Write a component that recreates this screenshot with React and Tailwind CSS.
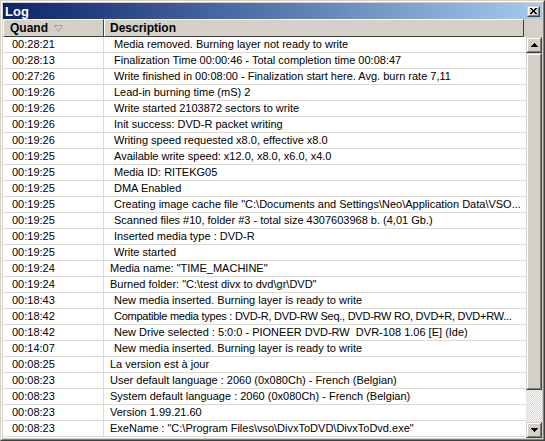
import React from "react";

const rows = [
  ["00:28:21", "Media removed. Burning layer not ready to write", true],
  ["00:28:13", "Finalization Time 00:00:46 - Total completion time 00:08:47", true],
  ["00:27:26", "Write finished in 00:08:00 - Finalization start here. Avg. burn rate 7,11", true],
  ["00:19:26", "Lead-in burning time (mS) 2", true],
  ["00:19:26", "Write started 2103872 sectors to write", true],
  ["00:19:26", "Init success: DVD-R packet writing", true],
  ["00:19:26", "Writing speed requested x8.0, effective x8.0", true],
  ["00:19:25", "Available write speed: x12.0, x8.0, x6.0, x4.0", true],
  ["00:19:25", "Media ID: RITEKG05", true],
  ["00:19:25", "DMA Enabled", true],
  ["00:19:25", 'Creating image cache file "C:\\Documents and Settings\\Neo\\Application Data\\VSO...', true],
  ["00:19:25", "Scanned files #10, folder #3 - total size 4307603968 b. (4,01 Gb.)", true],
  ["00:19:25", "Inserted media type : DVD-R", true],
  ["00:19:25", "Write started", true],
  ["00:19:24", 'Media name: "TIME_MACHINE"', false],
  ["00:19:24", 'Burned folder: "C:\\test divx to dvd\\gr\\DVD"', false],
  ["00:18:43", "New media inserted. Burning layer is ready to write", true],
  ["00:18:42", "Compatible media types : DVD-R, DVD-RW Seq., DVD-RW RO, DVD+R, DVD+RW...", true, true],
  ["00:18:42", "New Drive selected : 5:0:0 - PIONEER DVD-RW\u00a0 DVR-108 1.06 [E] (Ide)", true],
  ["00:14:07", "New media inserted. Burning layer is ready to write", true],
  ["00:08:25", "La version est à jour", false],
  ["00:08:23", "User default language : 2060 (0x080Ch) - French (Belgian)", false],
  ["00:08:23", "System default language : 2060 (0x080Ch) - French (Belgian)", false],
  ["00:08:23", "Version 1.99.21.60", false],
  ["00:08:23", 'ExeName : "C:\\Program Files\\vso\\DivxToDVD\\DivxToDvd.exe"', false],
];

function Raised({ className = "", children }) {
  return (
    <div className={"border border-t-[#d4d0c8] border-l-[#d4d0c8] border-r-[#404040] border-b-[#404040] " + className}>
      <div className="w-full h-full border border-t-white border-l-white border-r-[#808080] border-b-[#808080] bg-[#d4d0c8] flex items-center justify-center">
        {children}
      </div>
    </div>
  );
}

export default function App() {
  return (
    <div
      className="w-[545px] h-[441px] bg-[#d4d0c8] border border-t-[#d4d0c8] border-l-[#d4d0c8] border-r-[#404040] border-b-[#404040] text-black"
      style={{ fontFamily: '"Liberation Sans", Arial, sans-serif' }}
    >
      <div className="w-full h-full border border-t-white border-l-white border-r-[#808080] border-b-[#808080] p-px flex flex-col">
        {/* Title bar */}
        <div className="h-[16px] shrink-0 bg-[linear-gradient(to_right,#0a246a,#a6caf0)] flex items-center justify-between pl-[2px] pr-[2px]">
          <span className="text-white font-bold text-[13px] leading-none">Log</span>
          <Raised className="w-[13px] h-[11px]">
            <svg width="7" height="6" viewBox="0 0 7 6" shapeRendering="crispEdges">
              <path d="M0 0h2v1H0zM5 0h2v1H5zM1 1h2v1H1zM4 1h2v1H4zM2 2h3v2H2zM1 4h2v1H1zM4 4h2v1H4zM0 5h2v1H0zM5 5h2v1H5z" fill="#000" />
            </svg>
          </Raised>
        </div>
        {/* Body */}
        <div className="flex-1 flex min-h-0">
          <div className="flex-1 flex flex-col min-w-0 bg-white">
            {/* Header */}
            <div className="h-[18px] shrink-0 flex bg-[#d4d0c8] text-[12px] font-bold pr-[2px]">
              <div className="w-[101px] shrink-0 border-t border-l border-t-white border-l-white border-r border-r-[#404040] border-b border-b-[#404040] flex items-center pl-[6px] gap-[6px]">
                <span>Quand</span>
                <svg width="9" height="7" viewBox="0 0 9 7" shapeRendering="crispEdges">
                  <path d="M0.5 0.5H8.5L4.5 6.5Z" fill="none" stroke="#a0a0a0" />
                </svg>
              </div>
              <div className="flex-1 border-t border-l border-t-white border-l-white border-r border-r-[#404040] border-b border-b-[#404040] flex items-center pl-[5px]">
                <span>Description</span>
              </div>
            </div>
            {/* Rows */}
            <div className="flex-1 overflow-hidden text-[11px]">
              {rows.map(([t, d, ind, tight], i) => (
                <div key={i} className="h-[16px] flex border-b border-b-[#dcdad5] leading-[15px]">
                  <div className="w-[101px] shrink-0 pl-[9px] border-r border-r-[#dcdad5]">{t}</div>
                  <div
                    className={
                      "flex-1 whitespace-pre overflow-hidden " +
                      (ind ? "pl-[10px]" : "pl-[6px]") +
                      (tight ? " tracking-[-0.25px]" : "")
                    }
                  >
                    {d}
                  </div>
                </div>
              ))}
            </div>
          </div>
          {/* Scrollbar */}
          <div className="w-[16px] shrink-0 flex flex-col pt-[18px] bg-[#d4d0c8]">
            <Raised className="w-[16px] h-[16px] shrink-0">
              <svg width="7" height="4" viewBox="0 0 7 4" shapeRendering="crispEdges">
                <path d="M3 0h1v1H3zM2 1h3v1H2zM1 2h5v1H1zM0 3h7v1H0z" fill="#000" />
              </svg>
            </Raised>
            <Raised className="w-[16px] h-[337px] shrink-0" />
            <div className="flex-1 bg-[repeating-conic-gradient(#d4d0c8_0_25%,#ffffff_0_50%)] bg-[length:2px_2px]" />
            <Raised className="w-[16px] h-[16px] shrink-0">
              <svg width="7" height="4" viewBox="0 0 7 4" shapeRendering="crispEdges">
                <path d="M0 0h7v1H0zM1 1h5v1H1zM2 2h3v1H2zM3 3h1v1H3z" fill="#000" />
              </svg>
            </Raised>
          </div>
        </div>
      </div>
    </div>
  );
}
